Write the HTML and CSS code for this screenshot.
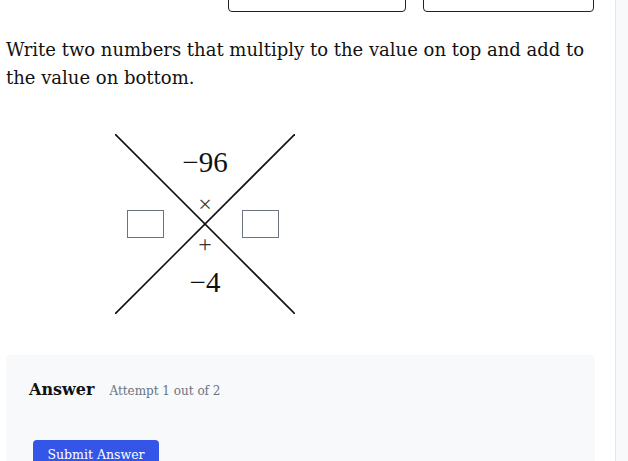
FILE: index.html
```html
<!DOCTYPE html>
<html lang="en">

<head>
    <meta charset="UTF-8">
    <meta name="viewport" content="width=device-width, initial-scale=1.0">
    <title>X Factor Puzzle</title>
    <link rel="stylesheet" href="styles.css">
</head>

<body>
    <div class="page">
        <main class="main">
            <div class="topbar">
                <button class="tab tab-wide" aria-label="Hint"></button>
                <button class="tab" aria-label="Show steps"></button>
            </div>

            <p class="prompt">Write two numbers that multiply to the value on top and add to the value on bottom.</p>

            <div class="diamond">
                <svg class="cross" width="180" height="180" viewBox="0 0 180 180">
                    <line x1="0" y1="0" x2="180" y2="180" />
                    <line x1="180" y1="0" x2="0" y2="180" />
                </svg>
                <span class="val val-top">&minus;96</span>
                <span class="op op-times">&times;</span>
                <span class="op op-plus">+</span>
                <span class="val val-bottom">&minus;4</span>
                <input class="slot slot-left" type="text">
                <input class="slot slot-right" type="text">
            </div>

            <section class="answer">
                <div class="answer-head">
                    <h3>Answer</h3>
                    <span class="attempt">Attempt 1 out of 2</span>
                </div>
                <div class="actions">
                    <button class="submit">Submit Answer</button>
                </div>
            </section>
        </main>
        <aside class="sidebar"></aside>
    </div>
</body>

</html>
```

FILE: styles.css
```css
body {
    margin: 0;
    background-color: #ffffff;
    color: #111111;
    font-family: "DejaVu Serif", "Liberation Serif", serif;
    overflow: hidden;
}

.page {
    display: flex;
    height: 100vh;
}

.main {
    flex: 1;
    padding: 0 20px 0 6px;
}

.sidebar {
    width: 12px;
    background-color: #f8f9fb;
    border-left: 1px solid #e5e7eb;
}

.topbar {
    display: flex;
    justify-content: flex-end;
    gap: 17px;
    padding-right: 1px;
    margin-top: -28px;
}

.tab {
    width: 171px;
    height: 40px;
    background: #ffffff;
    border: 1px solid #1f2328;
    border-radius: 4px;
}

.tab-wide {
    width: 178px;
}

.prompt {
    margin: 24px 0 0;
    font-size: 18px;
    line-height: 28px;
}

.diamond {
    position: relative;
    width: 180px;
    height: 180px;
    margin: 42px 0 0 109px;
}

.cross {
    display: block;
}

.cross line {
    stroke: #111111;
    stroke-width: 1.6;
}

.val,
.op {
    position: absolute;
    left: 0;
    right: 0;
    text-align: center;
    font-family: "Liberation Serif", "DejaVu Serif", serif;
    line-height: 1;
}

.val {
    font-size: 29px;
}

.val-top {
    top: 14px;
}

.val-bottom {
    top: 134px;
}

.op {
    font-size: 24px;
    color: #333333;
}

.op-times {
    top: 58px;
}

.op-plus {
    top: 98px;
}

.slot {
    position: absolute;
    top: 76px;
    width: 37px;
    height: 28px;
    box-sizing: border-box;
    border: 1px solid #6b7280;
    border-radius: 0;
    background: #ffffff;
    padding: 0;
}

.slot-left {
    left: 12px;
}

.slot-right {
    left: 127px;
}

.answer {
    margin-top: 41px;
    background-color: #f8f9fb;
    border-radius: 5px;
    padding: 25px 23px 24px;
}

.answer-head {
    display: flex;
    align-items: baseline;
    gap: 15px;
}

.answer-head h3 {
    margin: 0;
    font-size: 16px;
    font-weight: bold;
}

.attempt {
    font-size: 12px;
    color: #6b7280;
}

.actions {
    padding: 41px 4px 0;
}

.submit {
    width: 126px;
    background-color: #3355e8;
    color: #ffffff;
    border: none;
    border-radius: 4px;
    font-family: inherit;
    font-size: 12.5px;
    line-height: 20px;
    padding: 5px 0 10px;
    cursor: pointer;
}
```
